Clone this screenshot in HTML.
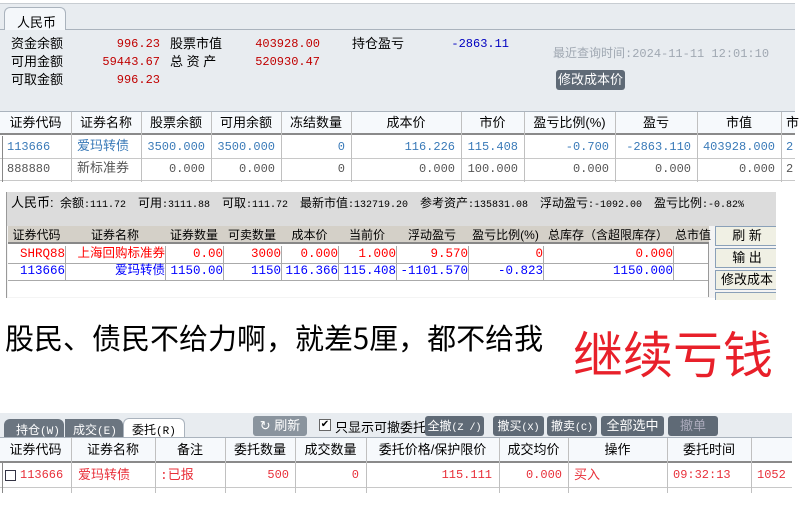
<!DOCTYPE html><html><head><meta charset="utf-8"><style>
*{margin:0;padding:0;box-sizing:border-box}
body{width:808px;height:512px;background:#fff;position:relative;overflow:hidden;font-family:"Liberation Sans","Noto Sans CJK SC",sans-serif;font-size:12px;color:#000}
.a{position:absolute;white-space:nowrap}
.m{font-family:"Liberation Mono","Noto Sans CJK SC",monospace}
.r{text-align:right}
.c{text-align:center}
.vl{position:absolute;width:1px}
.hl{position:absolute;height:1px}
.btn{position:absolute;background:#5f6a76;color:#fff;border-radius:3px;text-align:center;font-size:13px;overflow:hidden}
.t2 .m{font-size:10px}
</style></head><body>
<!-- Section 1 -->
<div class="a" style="left:0;top:3px;width:795px;height:108px;background:#e8ecf0;border-top:1px solid #c8cdd2"></div>
<div class="hl" style="left:0;top:29px;width:795px;background:#aab3bd"></div>
<div class="a" style="left:4px;top:7px;width:62px;height:23px;background:#f4f7fa;border:1px solid #aab3bd;border-bottom:none;border-radius:6px 6px 0 0;font-size:13px;padding:4px 0 0 12px">人民币</div>
<div class="a" style="left:11px;top:35px;font-size:13px;line-height:18px">资金余额<br>可用金额<br>可取金额</div>
<div class="a m r" style="left:90px;top:35px;width:70px;color:#c00000;line-height:18px">996.23<br>59443.67<br>996.23</div>
<div class="a" style="left:170px;top:35px;font-size:13px;line-height:18px">股票市值<br>总&nbsp;资&nbsp;产</div>
<div class="a m r" style="left:240px;top:35px;width:80px;color:#c00000;line-height:18px">403928.00<br>520930.47</div>
<div class="a" style="left:352px;top:35px;font-size:13px;line-height:18px">持仓盈亏</div>
<div class="a m r" style="left:440px;top:35px;width:69px;color:#0000c0;line-height:18px">-2863.11</div>
<div class="a" style="left:553px;top:44px;color:#a0a8b2;font-size:12px">最近查询时间<span class="m">:2024-11-11 12:01:10</span></div>
<div class="btn" style="left:556px;top:70px;width:69px;height:20px;line-height:20px">修改成本价</div>
<div class="a" style="left:0;top:111px;width:795px;height:24px;background:#f6f9fc;border-top:1px solid #aab3bd;border-bottom:2px solid #8a8a8a"></div>
<div class="a" style="left:0;top:111px;font-size:13px;line-height:24px">
<span class="a c" style="left:0;width:71px">证券代码</span><span class="a c" style="left:71px;width:70px">证券名称</span><span class="a c" style="left:141px;width:70px">股票余额</span><span class="a c" style="left:211px;width:70px">可用余额</span><span class="a c" style="left:281px;width:70px">冻结数量</span><span class="a c" style="left:351px;width:110px">成本价</span><span class="a c" style="left:461px;width:63px">市价</span><span class="a c" style="left:524px;width:91px">盈亏比例(%)</span><span class="a c" style="left:615px;width:82px">盈亏</span><span class="a c" style="left:697px;width:84px">市值</span><span class="a" style="left:786px">市</span></div>
<div class="hl" style="left:0;top:158px;width:795px;background:#c8c8c8"></div>
<div class="hl" style="left:0;top:180px;width:795px;background:#c8c8c8"></div>
<div class="vl" style="left:2px;top:136px;height:46px;background:#888"></div>
<div style="position:absolute;left:0;top:112px;height:70px">
<div class="vl" style="left:71px;height:70px;background:#c0c0c0"></div><div class="vl" style="left:141px;height:70px;background:#c0c0c0"></div><div class="vl" style="left:211px;height:70px;background:#c0c0c0"></div><div class="vl" style="left:281px;height:70px;background:#c0c0c0"></div><div class="vl" style="left:351px;height:70px;background:#c0c0c0"></div><div class="vl" style="left:461px;height:70px;background:#c0c0c0"></div><div class="vl" style="left:524px;height:70px;background:#c0c0c0"></div><div class="vl" style="left:615px;height:70px;background:#c0c0c0"></div><div class="vl" style="left:697px;height:70px;background:#c0c0c0"></div><div class="vl" style="left:781px;height:70px;background:#c0c0c0"></div></div>
<div class="a m" style="left:0;top:136px;width:795px;line-height:22px;color:#3a7ab8">
<span class="a" style="left:7px">113666</span><span class="a" style="left:77px;font-size:13px">爱玛转债</span><span class="a r" style="left:141px;width:64px">3500.000</span><span class="a r" style="left:211px;width:64px">3500.000</span><span class="a r" style="left:281px;width:64px">0</span><span class="a r" style="left:351px;width:104px">116.226</span><span class="a r" style="left:461px;width:57px">115.408</span><span class="a r" style="left:524px;width:85px">-0.700</span><span class="a r" style="left:615px;width:76px">-2863.110</span><span class="a r" style="left:697px;width:78px">403928.000</span><span class="a" style="left:786px">2</span></div>
<div class="a m" style="left:0;top:158px;width:795px;line-height:22px;color:#555">
<span class="a" style="left:7px">888880</span><span class="a" style="left:77px;font-size:13px">新标准券</span><span class="a r" style="left:141px;width:64px">0.000</span><span class="a r" style="left:211px;width:64px">0.000</span><span class="a r" style="left:281px;width:64px">0</span><span class="a r" style="left:351px;width:104px">0.000</span><span class="a r" style="left:461px;width:57px">100.000</span><span class="a r" style="left:524px;width:85px">0.000</span><span class="a r" style="left:615px;width:76px">0.000</span><span class="a r" style="left:697px;width:78px">0.000</span><span class="a" style="left:786px">2</span></div>
<!-- Section 2 -->
<div class="a" style="left:6px;top:192px;width:770px;height:106px;background:#f4f4f4;border-left:1px solid #999"></div>
<div class="a" style="left:7px;top:192px;width:769px;height:34px;background:#dcdcdc"></div>
<div class="a t2" style="left:0;top:195px;font-size:12px;line-height:16px">
<span class="a" style="left:11px;font-size:13px">人民币:</span>
<span class="a" style="left:60px">余额<span class="m">:111.72</span></span>
<span class="a" style="left:138px">可用<span class="m">:3111.88</span></span>
<span class="a" style="left:222px">可取<span class="m">:111.72</span></span>
<span class="a" style="left:300px">最新市值<span class="m">:132719.20</span></span>
<span class="a" style="left:420px">参考资产<span class="m">:135831.08</span></span>
<span class="a" style="left:540px">浮动盈亏<span class="m">:-1092.00</span></span>
<span class="a" style="left:654px">盈亏比例<span class="m">:-0.82%</span></span></div>
<div class="a" style="left:8px;top:226px;width:701px;height:71px;background:#fff;border-right:1px solid #999"></div>
<div class="a" style="left:8px;top:226px;width:701px;height:18px;background:#d4d0c8;border-bottom:2px solid #888;font-size:12px;line-height:18px">
<span class="a c" style="left:0;width:57px">证券代码</span><span class="a c" style="left:57px;width:100px">证券名称</span><span class="a c" style="left:157px;width:58px">证券数量</span><span class="a c" style="left:215px;width:58px">可卖数量</span><span class="a c" style="left:273px;width:57px">成本价</span><span class="a c" style="left:330px;width:58px">当前价</span><span class="a c" style="left:388px;width:72px">浮动盈亏</span><span class="a c" style="left:460px;width:75px">盈亏比例(%)</span><span class="a c" style="left:535px;width:130px">总库存（含超限库存）</span><span class="a" style="left:667px">总市值</span></div>
<div class="hl" style="left:8px;top:263px;width:700px;background:#aaa"></div>
<div class="hl" style="left:8px;top:280px;width:700px;background:#aaa"></div>
<div style="position:absolute;left:0;top:246px">
<div class="vl" style="left:65px;height:34px;background:#aaa"></div><div class="vl" style="left:165px;height:34px;background:#aaa"></div><div class="vl" style="left:223px;height:34px;background:#aaa"></div><div class="vl" style="left:281px;height:34px;background:#aaa"></div><div class="vl" style="left:338px;height:34px;background:#aaa"></div><div class="vl" style="left:396px;height:34px;background:#aaa"></div><div class="vl" style="left:468px;height:34px;background:#aaa"></div><div class="vl" style="left:543px;height:34px;background:#aaa"></div><div class="vl" style="left:673px;height:34px;background:#aaa"></div></div>
<div class="a m" style="left:0;top:246px;line-height:17px;color:#f00;font-size:12.5px">
<span class="a r" style="left:8px;width:57px">SHRQ88</span><span class="a r" style="left:65px;width:100px">上海回购标准券</span><span class="a r" style="left:165px;width:58px">0.00</span><span class="a r" style="left:223px;width:58px">3000</span><span class="a r" style="left:281px;width:57px">0.000</span><span class="a r" style="left:338px;width:58px">1.000</span><span class="a r" style="left:396px;width:72px">9.570</span><span class="a r" style="left:468px;width:75px">0</span><span class="a r" style="left:543px;width:130px">0.000</span></div>
<div class="a m" style="left:0;top:263px;line-height:17px;color:#00f;font-size:12.5px">
<span class="a r" style="left:8px;width:57px">113666</span><span class="a r" style="left:65px;width:100px">爱玛转债</span><span class="a r" style="left:165px;width:58px">1150.00</span><span class="a r" style="left:223px;width:58px">1150</span><span class="a r" style="left:281px;width:57px">116.366</span><span class="a r" style="left:338px;width:58px">115.408</span><span class="a r" style="left:396px;width:72px">-1101.570</span><span class="a r" style="left:468px;width:75px">-0.823</span><span class="a r" style="left:543px;width:130px">1150.000</span></div>
<div class="a c" style="left:715px;top:226px;width:64px;height:20px;background:#f0f0e4;border:1px solid #8aa0b8;line-height:18px;font-size:13px">刷 新</div>
<div class="a c" style="left:715px;top:248px;width:64px;height:20px;background:#f0f0e4;border:1px solid #8aa0b8;line-height:18px;font-size:13px">输 出</div>
<div class="a c" style="left:715px;top:270px;width:64px;height:20px;background:#f0f0e4;border:1px solid #8aa0b8;line-height:18px;font-size:13px;overflow:hidden">修改成本</div>
<div class="a" style="left:715px;top:292px;width:64px;height:8px;background:#f0f0e4;border:1px solid #8aa0b8;border-bottom:none"></div>
<div class="a" style="left:776px;top:185px;width:32px;height:120px;background:#fff"></div>
<!-- Big text -->
<div class="a" style="left:5px;top:318px;font-size:29px;line-height:38px;font-family:'Noto Sans CJK SC',sans-serif">股民、债民不给力啊，就差5厘，都不给我</div>
<div class="a" style="left:573px;top:321px;font-size:50px;line-height:62px;color:#e8202a;font-family:'Noto Sans CJK SC',sans-serif">继续亏钱</div>
<!-- Section 3 -->
<div class="a" style="left:0;top:413px;width:792px;height:24px;background:#e8ecf0"></div>
<div class="a" style="left:4px;top:419px;width:60px;height:19px;background:#6b7580;color:#fff;border-radius:6px 6px 0 0;padding:2px 0 0 12px;font-size:12px">持仓<span class="m" style="font-size:11px">(W)</span></div>
<div class="a" style="left:65px;top:419px;width:58px;height:19px;background:#6b7580;color:#fff;border-radius:0 6px 0 0;padding:2px 0 0 8px;font-size:12px">成交<span class="m" style="font-size:11px">(E)</span></div>
<div class="a" style="left:123px;top:418px;width:62px;height:20px;background:#fff;border:1px solid #aab3bd;border-bottom:none;border-radius:6px 6px 0 0;padding:2px 0 0 8px;font-size:12px">委托<span class="m" style="font-size:11px">(R)</span></div>
<div class="btn" style="left:253px;top:416px;width:54px;height:20px;line-height:20px;background:#8a949e">↻ 刷新</div>
<div class="a" style="left:319px;top:419px;width:12px;height:12px;border:1px solid #666;background:#fff;font-size:10px;line-height:10px;text-align:center">✔</div>
<div class="a" style="left:335px;top:417px;font-size:13px">只显示可撤委托</div>
<div class="btn" style="left:425px;top:416px;width:59px;height:20px;line-height:20px;font-size:12px">全撤<span class="m" style="font-size:10px">(Z /)</span></div>
<div class="btn" style="left:493px;top:416px;width:51px;height:20px;line-height:20px;font-size:12px">撤买<span class="m" style="font-size:10px">(X)</span></div>
<div class="btn" style="left:547px;top:416px;width:50px;height:20px;line-height:20px;font-size:12px">撤卖<span class="m" style="font-size:10px">(C)</span></div>
<div class="btn" style="left:601px;top:416px;width:63px;height:20px;line-height:20px">全部选中</div>
<div class="btn" style="left:668px;top:416px;width:50px;height:20px;line-height:20px;color:#aab">撤单</div>
<div class="a" style="left:0;top:437px;width:792px;height:26px;background:#f6f9fc;border-top:1px solid #aab3bd;border-bottom:2px solid #8a8a8a;font-size:13px;line-height:24px">
<span class="a c" style="left:0;width:71px">证券代码</span><span class="a c" style="left:71px;width:84px">证券名称</span><span class="a c" style="left:155px;width:70px">备注</span><span class="a c" style="left:225px;width:70px">委托数量</span><span class="a c" style="left:295px;width:71px">成交数量</span><span class="a c" style="left:366px;width:133px">委托价格/保护限价</span><span class="a c" style="left:499px;width:69px">成交均价</span><span class="a c" style="left:568px;width:99px">操作</span><span class="a c" style="left:667px;width:84px">委托时间</span></div>
<div class="hl" style="left:0;top:487px;width:792px;background:#c8c8c8"></div>
<div class="vl" style="left:2px;top:463px;height:30px;background:#888"></div>
<div style="position:absolute;left:0;top:438px">
<div class="vl" style="left:71px;height:55px;background:#c0c0c0"></div><div class="vl" style="left:155px;height:55px;background:#c0c0c0"></div><div class="vl" style="left:225px;height:55px;background:#c0c0c0"></div><div class="vl" style="left:295px;height:55px;background:#c0c0c0"></div><div class="vl" style="left:366px;height:55px;background:#c0c0c0"></div><div class="vl" style="left:499px;height:55px;background:#c0c0c0"></div><div class="vl" style="left:568px;height:55px;background:#c0c0c0"></div><div class="vl" style="left:667px;height:55px;background:#c0c0c0"></div><div class="vl" style="left:751px;height:55px;background:#c0c0c0"></div></div>
<div class="a" style="left:5px;top:470px;width:11px;height:11px;border:1px solid #334"></div>
<div class="a m" style="left:0;top:464px;line-height:23px;color:#e8303a">
<span class="a" style="left:20px">113666</span><span class="a" style="left:78px;font-size:13px">爱玛转债</span><span class="a" style="left:160px;font-size:13px">:已报</span><span class="a r" style="left:225px;width:64px">500</span><span class="a r" style="left:295px;width:64px">0</span><span class="a r" style="left:366px;width:126px">115.111</span><span class="a r" style="left:499px;width:63px">0.000</span><span class="a" style="left:574px;font-size:13px">买入</span><span class="a" style="left:673px">09:32:13</span><span class="a" style="left:757px">1052</span></div>
</body></html>
